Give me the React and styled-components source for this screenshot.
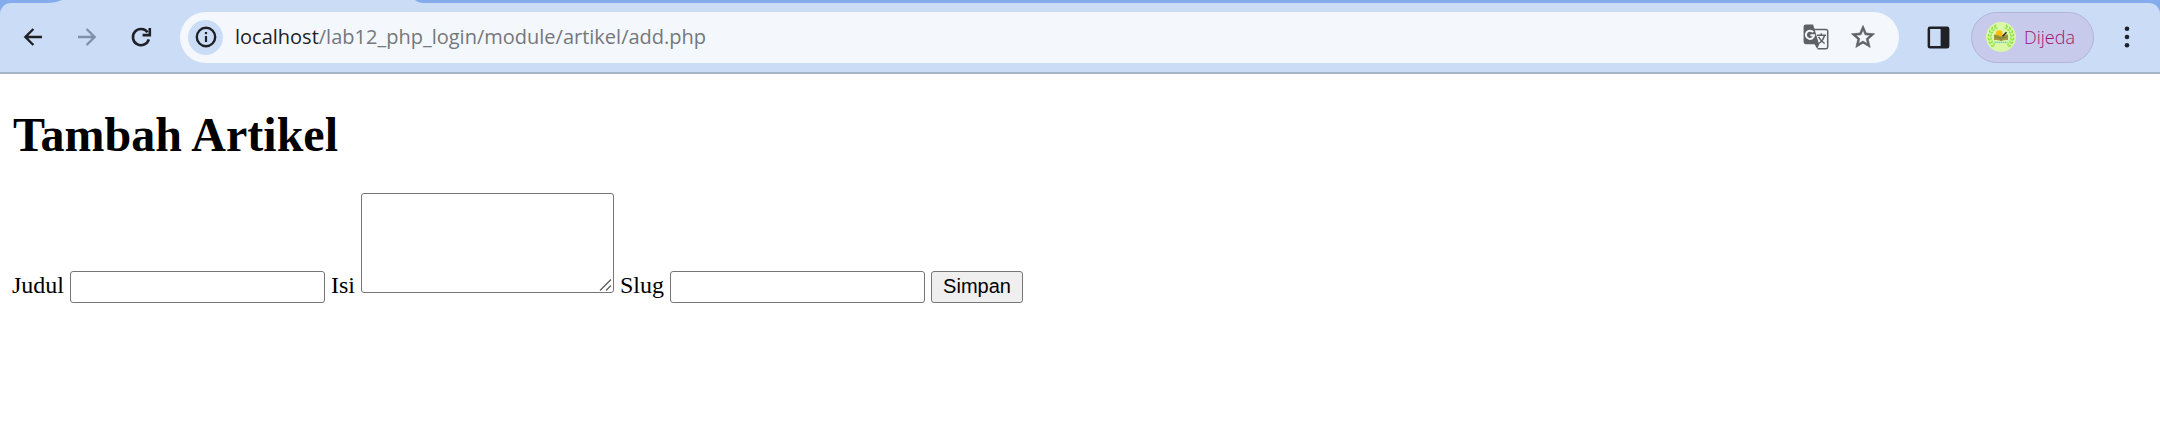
import React from "react";
import styled, { createGlobalStyle } from "styled-components";

const GlobalStyle = createGlobalStyle`
  * { box-sizing: border-box; }
  html, body { margin: 0; background: #fff; overflow: hidden; }
`;

const Window = styled.div`
  width: 2160px;
  height: 439px;
  background: #fff;
  overflow: hidden;
`;

const Frame = styled.div`
  background: #84abeb;
`;

const TabStrip = styled.div`
  height: 3px;
  padding-left: 46px;
`;

const TabFoot = styled.svg`
  display: block;
  width: 378px;
  height: 3px;
`;

const Toolbar = styled.header`
  display: flex;
  align-items: center;
  height: 71px;
  padding: 0 0 1px 21px;
  background: #cbdcf6;
  border-bottom: 2px solid #a6b3c9;
  border-radius: 11px 11px 0 0;
`;

const NavGroup = styled.nav`
  display: flex;
  gap: 30px;
  width: 159px;
`;

const Icon = styled.svg`
  display: block;
  flex: none;
  width: ${(p) => p.$size || 24}px;
  height: ${(p) => p.$size || 24}px;
  color: ${(p) => p.$color || "#1f2126"};
`;

const AddressBar = styled.div`
  display: flex;
  align-items: center;
  width: 1719px;
  height: 51px;
  padding: 0 22px 0 8px;
  background: #f4f8fd;
  border-radius: 26px;
`;

const SiteInfo = styled.div`
  display: grid;
  place-items: center;
  width: 35px;
  height: 35px;
  border-radius: 50%;
  background: #cbdcf6;
`;

const Url = styled.div`
  flex: 1;
  margin-left: 12px;
  font: 20px/28px "Open Sans", sans-serif;
  white-space: nowrap;
  color: #74777b;
`;

const Host = styled.span`
  color: #1f2126;
`;

const BarActions = styled.div`
  display: flex;
  align-items: center;
  gap: 20px;
`;

const PanelButton = styled.div`
  margin: 0 20px 0 27px;
`;

const Profile = styled.div`
  display: flex;
  align-items: center;
  width: 123px;
  height: 51px;
  padding-left: 14px;
  border: 1px solid #b1b5d8;
  border-radius: 26px;
  background: #c8caeb;
`;

const ProfileName = styled.span`
  margin-left: 8px;
  font: 300 18px/28px "Open Sans", sans-serif;
  color: #a0146c;
`;

const MenuButton = styled.div`
  margin-left: 21px;
`;

const Page = styled.main`
  padding: 0 12px;
  color: #000;
  font: 24px/27px "Liberation Serif", "Times New Roman", serif;
`;

const Title = styled.h1`
  margin: 0 0 0 1px;
  padding-top: 33px;
  font-size: 48px;
  line-height: 55px;
  font-weight: bold;
`;

const Form = styled.form`
  display: flex;
  align-items: flex-end;
  height: 141px;
`;

const Label = styled.label`
  width: ${(p) => p.$width}px;
  line-height: 27px;
  padding-bottom: 4px;
`;

const Input = styled.input`
  width: 255px;
  height: 32px;
  margin: 0 6px 0 0;
  border: 1px solid #767676;
  border-radius: 3px;
  background: #fff;
  font: 20px "Liberation Sans", Arial, sans-serif;
`;

const AreaWrap = styled.div`
  position: relative;
  width: 253px;
  height: 100px;
  margin: 0 6px 10px 0;
`;

const Area = styled.textarea`
  display: block;
  width: 253px;
  height: 100px;
  resize: none;
  border: 1px solid #767676;
  border-radius: 3px;
  background: #fff;
`;

const Grip = styled.svg`
  position: absolute;
  right: 2px;
  bottom: 2px;
  width: 13px;
  height: 12px;
`;

const Submit = styled.button`
  width: 92px;
  height: 32px;
  padding: 0 0 2px;
  border: 1px solid #767676;
  border-radius: 3px;
  background: #efefef;
  color: #000;
  font: 20px/26px "Liberation Sans", Arial, sans-serif;
`;

const ArrowIcon = ({ flip, color }) => (
  <Icon viewBox="0 0 24 24" $color={color} fill="none" stroke="currentColor" strokeWidth="2.4">
    <path d={flip ? "M3 12h16M11.6 4l8 8-8 8" : "M21 12H5M12.400 4l-8 8 8 8"} />
  </Icon>
);

const ReloadIcon = () => (
  <Icon viewBox="0 0 24 24" fill="none" stroke="currentColor" strokeWidth="2.6">
    <path d="M19.8 14.4A8.1 8.1 0 1 1 18.6 7.3" />
    <path d="M20.8 3v7.1h-7.2" />
  </Icon>
);

const InfoIcon = () => (
  <Icon viewBox="0 0 24 24" fill="none" stroke="currentColor">
    <circle cx="12" cy="12" r="9.2" strokeWidth="2.4" />
    <path d="M12 11v6" strokeWidth="2.200" />
    <path d="M12 7v2.1" strokeWidth="2.200" />
  </Icon>
);

const TranslateIcon = () => (
  <Icon viewBox="0 0 26 26" $size={26} $color="#5f6165">
    <path d="M11 5.500h12a1.700 1.700 0 0 1 1.700 1.700V23a1.700 1.700 0 0 1-1.700 1.700h-8.300" fill="none" stroke="currentColor" strokeWidth="1.500" />
    <path d="M2.700.5h7.400l6 19.700H2.700A2.100 2.100 0 0 1 .6 18.100V2.600A2.100 2.100 0 0 1 2.700.5z" fill="currentColor" />
    <path d="M11.400 20h4.900l-2 5z" fill="currentColor" />
    <path d="M10.200 8.200A4.100 4.100 0 1 0 11.100 11.200H7.400" fill="none" stroke="#f4f8fd" strokeWidth="2" />
    <path d="M14 11.300h9M18.300 9.300v2M21.400 11.500c-.7 3.500-3 6.200-5.600 8M15.600 12.800c1.300 3 3.500 5 6 6.700" fill="none" stroke="currentColor" strokeWidth="1.500" />
  </Icon>
);

const StarIcon = () => (
  <Icon viewBox="0 0 24 24" $size={28} $color="#5f6165">
    <path
      fill="currentColor"
      stroke="currentColor"
      strokeWidth=".5"
      d="M22 9.24l-7.19-.62L12 2 9.19 8.63 2 9.24l5.46 4.73L5.82 21 12 17.27 18.18 21l-1.63-7.03L22 9.24zM12 15.4l-3.76 2.27 1-4.28-3.32-2.88 4.38-.38L12 6.1l1.71 4.04 4.38.38-3.32 2.88 1 4.28L12 15.4z"
    />
  </Icon>
);

const PanelIcon = () => (
  <Icon viewBox="0 0 25 25" $size={25}>
    <path
      fill="currentColor"
      fillRule="evenodd"
      d="M4 1.5h17a2.4 2.4 0 0 1 2.4 2.4v17.3a2.4 2.4 0 0 1-2.4 2.4H4a2.4 2.4 0 0 1-2.4-2.4V3.9A2.4 2.4 0 0 1 4 1.5zM4.1 4v17.1h10.5V4z"
    />
  </Icon>
);

const leaves = [-62, -44, -26, -8, 10, 28, 46];

const Avatar = () => (
  <Icon viewBox="0 0 30 30" $size={30}>
    <circle cx="15" cy="15" r="15" fill="#dbf8a6" />
    {[1, -1].map((side) => (
      <g key={side} transform={side === 1 ? undefined : "translate(30 0) scale(-1 1)"}>
        {leaves.map((a) => (
          <g key={a} transform={`rotate(${-a} 15 15)`} fill="#86e23c">
            <ellipse cx="2.6" cy="15" rx=".8" ry="1.7" transform="rotate(-28 2.6 15)" />
            <ellipse cx="4.9" cy="15" rx=".7" ry="1.5" transform="rotate(32 4.9 15)" />
          </g>
        ))}
      </g>
    ))}
    <circle cx="13.2" cy="11.500" r="3.3" fill="#ffbd0a" />
    <path d="M8 12.500q4-.5 7 2 3-2.500 7-2v5.500q-4-.5-7 1-3-1.500-7-1z" fill="#a09a45" />
    <path d="M15 14.500v4.500M9 15q3 0 5 1.500M21 15q-3 0-5 1.500" stroke="#6f6a2c" strokeWidth=".6" fill="none" />
    <path d="M16.500 14.200l4-4" stroke="#20251c" strokeWidth="1.400" />
    <path d="M8.500 20.300h13" stroke="#5cc0b4" strokeWidth="1" strokeDasharray="1.600 .5" />
  </Icon>
);

const DotsIcon = () => (
  <Icon viewBox="0 0 24 24" fill="currentColor">
    <circle cx="12" cy="3.700" r="2.300" />
    <circle cx="12" cy="12" r="2.300" />
    <circle cx="12" cy="20.300" r="2.300" />
  </Icon>
);

export default function App() {
  return (
    <Window>
      <GlobalStyle />
      <Frame>
        <TabStrip>
          <TabFoot viewBox="0 0 378 3">
            <path d="M16 0H369Q372 3 378 3H0Q10 3 16 0z" fill="#cbdcf6" />
          </TabFoot>
        </TabStrip>
        <Toolbar>
          <NavGroup>
            <ArrowIcon />
            <ArrowIcon flip color="#8090aa" />
            <ReloadIcon />
          </NavGroup>
          <AddressBar>
            <SiteInfo>
              <InfoIcon />
            </SiteInfo>
            <Url>
              <Host>localhost</Host>/lab12_php_login/module/artikel/add.php
            </Url>
            <BarActions>
              <TranslateIcon />
              <StarIcon />
            </BarActions>
          </AddressBar>
          <PanelButton>
            <PanelIcon />
          </PanelButton>
          <Profile>
            <Avatar />
            <ProfileName>Dijeda</ProfileName>
          </Profile>
          <MenuButton>
            <DotsIcon />
          </MenuButton>
        </Toolbar>
      </Frame>
      <Page>
        <Title>Tambah Artikel</Title>
        <Form>
          <Label $width={58}>Judul</Label>
          <Input type="text" />
          <Label $width={30}>Isi</Label>
          <AreaWrap>
            <Area />
            <Grip viewBox="0 0 13 12" stroke="#5c5c5c" strokeWidth="1.300">
              <path d="M1 11.500L12 .5M7 11.500L12 6.500" />
            </Grip>
          </AreaWrap>
          <Label $width={50}>Slug</Label>
          <Input type="text" />
          <Submit type="button">Simpan</Submit>
        </Form>
      </Page>
    </Window>
  );
}
